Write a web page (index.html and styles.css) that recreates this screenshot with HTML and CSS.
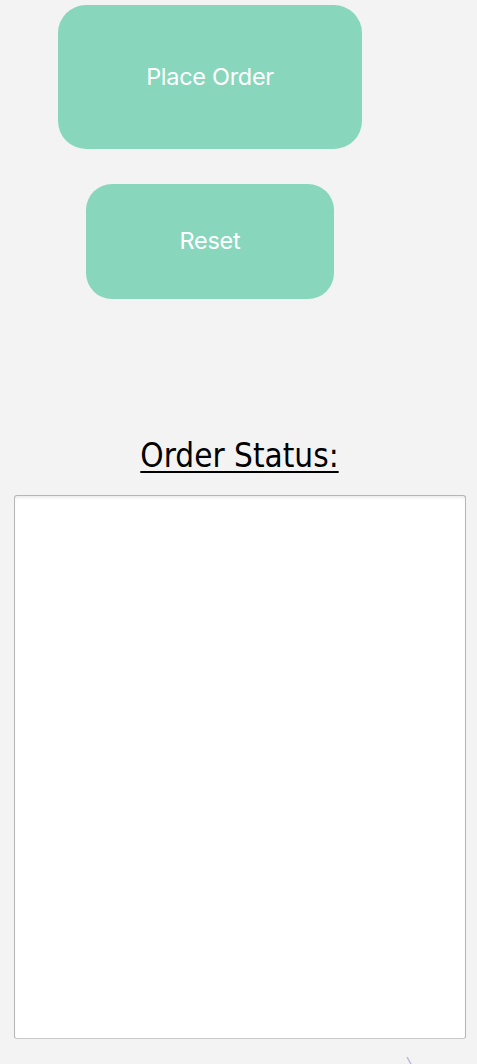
FILE: index.html
```html
<!DOCTYPE html>
<html>
<head>
<meta charset="utf-8">
<link rel="stylesheet" href="styles.css">
</head>
<body>
<div class="page">
  <div class="actions">
    <button class="btn btn-order">Place Order</button>
    <button class="btn btn-reset">Reset</button>
  </div>
  <section class="status">
    <h2 class="status-title">Order Status:</h2>
    <textarea class="status-box"></textarea>
    <div class="footer-mark">
      <svg width="10" height="8" viewBox="0 0 10 8"><path d="M1 0 L5 7" stroke="#b9b6d6" stroke-width="1.4" fill="none"/></svg>
    </div>
  </section>
</div>
</body>
</html>
```

FILE: styles.css
```css
html, body {
  margin: 0;
  padding: 0;
  background: #f3f3f3;
}
.page {
  width: 477px;
  height: 1064px;
  overflow: hidden;
}
.actions {
  display: flex;
  flex-direction: column;
  align-items: flex-start;
  padding-top: 5px;
  gap: 35px;
}
.btn {
  border: none;
  background: #88d7bd;
  color: #ffffff;
  font-family: Inter, "Noto Sans", sans-serif;
  font-size: 23.5px;
  letter-spacing: -0.3px;
  cursor: pointer;
  padding: 0 0 2px 0;
}
.btn-order {
  margin-left: 58px;
  width: 304px;
  height: 144px;
  border-radius: 28px;
}
.btn-reset {
  margin-left: 86px;
  width: 248px;
  height: 115px;
  border-radius: 26px;
}
.status {
  display: flex;
  flex-direction: column;
  align-items: center;
  padding-top: 137px;
}
.status-title {
  margin: 0 0 0 2px;
  font-family: "DejaVu Sans Condensed", "DejaVu Sans", sans-serif;
  font-weight: normal;
  font-size: 33px;
  line-height: 40px;
  text-decoration: underline;
  text-decoration-thickness: 2px;
  text-underline-offset: 4px;
  color: #000;
}
.status-box {
  align-self: flex-start;
  margin-left: 14px;
  margin-top: 19px;
  box-sizing: border-box;
  width: 452px;
  height: 544px;
  border: 1px solid #b5b5b5;
  border-bottom-color: #c8c8c8;
  border-radius: 3px;
  background: #fff;
  box-shadow: inset 0 3px 3px -1px rgba(0,0,0,0.08);
  resize: none;
  outline: none;
}
.footer-mark {
  align-self: flex-start;
  margin-left: 406px;
  margin-top: 18px;
  line-height: 0;
}
```
